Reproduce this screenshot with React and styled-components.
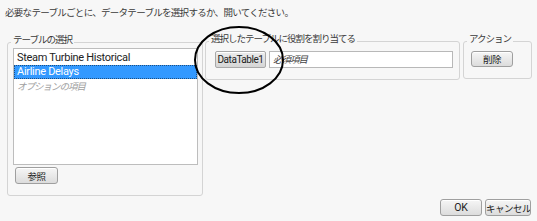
import React from 'react';
import styled, { createGlobalStyle } from 'styled-components';

const GlobalStyle = createGlobalStyle`
  html, body {
    margin: 0;
    padding: 0;
    background: #f7f7f7;
  }
`;

const jp = `"Noto Sans CJK JP", "Liberation Sans", sans-serif`;
const latin = `Roboto, "Liberation Sans", "Noto Sans CJK JP", sans-serif`;

const Dialog = styled.div`
  position: relative;
  width: 537px;
  height: 221px;
  box-sizing: border-box;
  background: #f7f7f7;
  display: flex;
  flex-direction: column;
  overflow: hidden;
  font-family: ${jp};
  color: #333;
`;

const Title = styled.div`
  margin: 6px 0 0 5px;
  height: 12px;
  line-height: 12px;
  font-size: 9.5px;
  letter-spacing: -0.7px;
  color: #3a3a3a;
  white-space: nowrap;
`;

const Main = styled.div`
  display: flex;
  align-items: flex-start;
  margin-top: 23px;
  padding-left: 7px;
`;

const RightSide = styled.div`
  display: flex;
  align-items: flex-start;
  gap: 3px;
  margin-left: 2px;
`;

const Group = styled.div`
  position: relative;
  box-sizing: border-box;
  width: ${p => p.$w}px;
  height: ${p => p.$h}px;
  margin-top: ${p => p.$top || 0}px;
  border: 1px solid #d4d4d4;
  border-radius: 3px;
  padding: ${p => p.$pad};
  display: flex;
  flex-direction: ${p => p.$dir || 'row'};
  align-items: flex-start;
  gap: ${p => p.$gap || 0}px;
`;

const Caption = styled.span`
  position: absolute;
  top: -10px;
  left: 3px;
  padding: 0 2px;
  background: #f7f7f7;
  line-height: 12px;
  font-size: 9.5px;
  letter-spacing: -1px;
  color: #3a3a3a;
  white-space: nowrap;
`;

const List = styled.div`
  box-sizing: border-box;
  width: 185px;
  height: 117px;
  background: #fff;
  border: 1px solid #bdbdbd;
  padding-top: 2px;
`;

const Item = styled.div`
  box-sizing: border-box;
  height: 14px;
  line-height: 12px;
  padding-left: 2px;
  border: 1px ${p => (p.$selected ? 'dotted #1f4f80' : 'solid transparent')};
  background: ${p => (p.$selected ? '#3399ff' : 'transparent')};
  color: ${p => (p.$selected ? '#fff' : p.$hint ? '#a0a0a0' : '#222')};
  font-family: ${p => (p.$hint ? jp : latin)};
  font-style: ${p => (p.$hint ? 'italic' : 'normal')};
  font-size: ${p => (p.$hint ? '9.5px' : '11px')};
  letter-spacing: ${p => (p.$hint ? '-1px' : '-0.3px')};
  white-space: nowrap;
`;

const Button = styled.button`
  box-sizing: border-box;
  width: ${p => p.$w}px;
  height: ${p => p.$h || 16}px;
  margin: 0;
  padding: 0;
  border: 1px solid #9f9f9f;
  border-radius: 3px;
  background: linear-gradient(#f6f6f6, #dcdcdc);
  box-shadow: inset 0 1px 0 #fff;
  color: #222;
  font-family: ${p => (p.$latin ? latin : jp)};
  font-size: ${p => (p.$latin ? '10.5px' : '9.5px')};
  letter-spacing: ${p => (p.$latin ? '-0.2px' : '-0.5px')};
  line-height: 14px;
  white-space: nowrap;
  overflow: hidden;
  flex-shrink: 0;
`;

const TagButton = styled(Button)`
  background: linear-gradient(#ececec, #d6d6d6);
  border-color: #a8a8a8;
  border-radius: 2px;
  font-size: 10px;
  letter-spacing: -0.45px;
`;

const RoleField = styled.div`
  box-sizing: border-box;
  width: 184px;
  height: 17px;
  background: #fff;
  border: 1px solid #b8b8b8;
  padding-left: 3px;
  line-height: 15px;
  font-size: 9.5px;
  font-style: italic;
  letter-spacing: -1px;
  color: #444;
`;

const Footer = styled.div`
  display: flex;
  justify-content: flex-end;
  gap: 3px;
  margin-top: 3px;
  padding-right: 6px;
`;

const Ring = styled.svg`
  position: absolute;
  left: 193px;
  top: 25px;
  pointer-events: none;
`;

export default function App() {
  return (
    <>
      <GlobalStyle />
      <Dialog>
        <Title>必要なテーブルごとに、データテーブルを選択するか、開いてください。</Title>
        <Main>
          <Group $w={196} $h={154} $top={1} $pad="5px 0 0 5px" $dir="column" $gap={2}>
            <Caption>テーブルの選択</Caption>
            <List>
              <Item>Steam Turbine Historical</Item>
              <Item $selected>Airline Delays</Item>
              <Item $hint>オプションの項目</Item>
            </List>
            <Button $w={43} $h={17} style={{ marginLeft: 2 }}>参照</Button>
          </Group>
          <RightSide>
            <Group $w={255} $h={39} $pad="9px 0 0 9px" $gap={3}>
              <Caption>選択したテーブルに役割を割り当てる</Caption>
              <TagButton $w={51} $h={17} $latin>DataTable1</TagButton>
              <RoleField>必須項目</RoleField>
            </Group>
            <Group $w={69} $h={38} $pad="9px 0 0 7px">
              <Caption>アクション</Caption>
              <Button $w={42}>削除</Button>
            </Group>
          </RightSide>
        </Main>
        <Footer>
          <Button $w={42} $h={17} $latin>OK</Button>
          <Button $w={46} $h={17}>キャンセル</Button>
        </Footer>
        <Ring width="92" height="70" viewBox="0 0 92 70">
          <ellipse cx="46" cy="35" rx="44" ry="33" fill="none" stroke="#000" strokeWidth="2" />
        </Ring>
      </Dialog>
    </>
  );
}
